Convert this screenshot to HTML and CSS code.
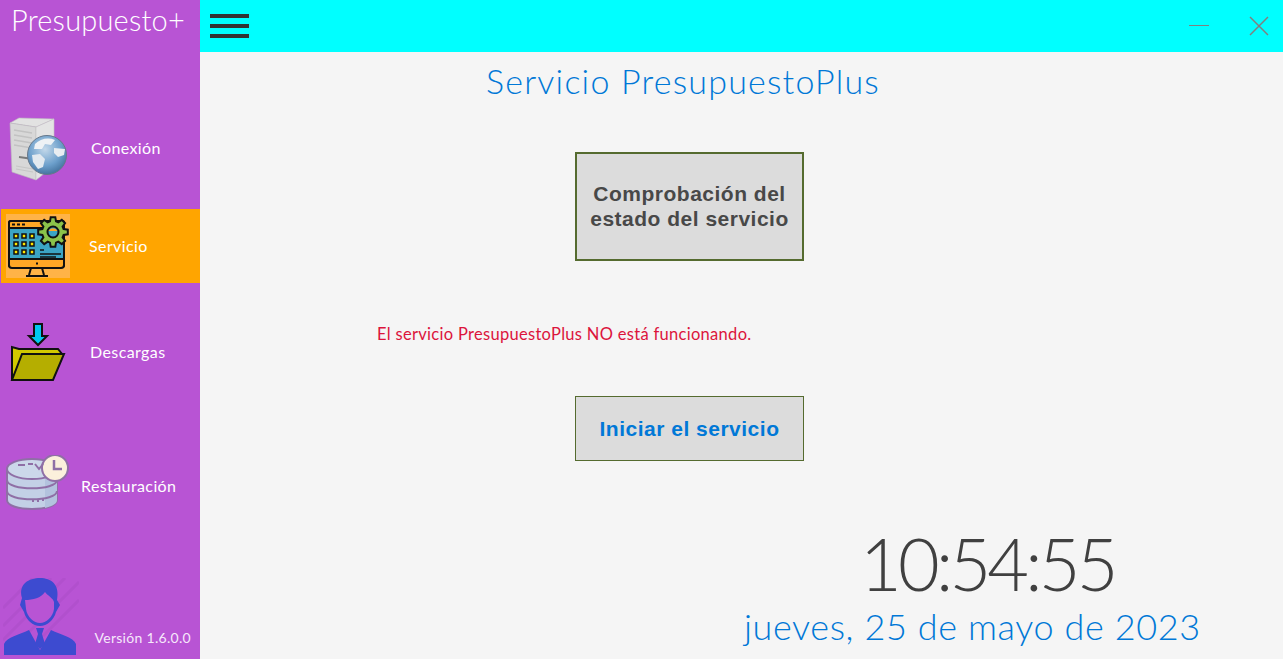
FILE: index.html
```html
<!DOCTYPE html>
<html lang="es">
<head>
    <meta charset="UTF-8">
    <meta name="viewport" content="width=device-width, initial-scale=1.0">
    <title>Presupuesto+</title>
    <link rel="stylesheet" href="styles.css">
</head>
<body>
    <div class="app">
        <aside class="sidebar">
            <div class="brand">Presupuesto+</div>
            <nav class="nav">
                <div class="nav-item item-conexion">
                    <svg class="icon-server" width="62" height="66" viewBox="0 0 62 66">
                        <defs>
                            <radialGradient id="globe" cx="0.45" cy="0.35" r="0.7">
                                <stop offset="0" stop-color="#c4d9ea"/>
                                <stop offset="0.6" stop-color="#6c9fcb"/>
                                <stop offset="1" stop-color="#3e6b96"/>
                            </radialGradient>
                        </defs>
                        <path d="M1 7 L10 2 L45 3 L27 11 Z" fill="#e2e2e2" stroke="#c0c0c0" stroke-width="0.6"/>
                        <path d="M1 7 L27 11 L27 64 L3 56 Z" fill="#d8d8d8" stroke="#bcbcbc" stroke-width="0.6"/>
                        <path d="M27 11 L45 3 L45 50 L27 64 Z" fill="#e4e4e4" stroke="#c4c4c4" stroke-width="0.6"/>
                        <path d="M5 14 L23 17 M5 19 L23 22 M5 24 L23 27 M5 29 L23 32" stroke="#c2c2c2" stroke-width="1.400"/>
                        <path d="M10 41 L24 43" stroke="#7a7a7a" stroke-width="2"/>
                        <path d="M7 50 L24 53 M7 53 L24 56" stroke="#c6c6c6" stroke-width="1"/>
                        <circle cx="38" cy="39" r="19.500" fill="url(#globe)" stroke="#67788a" stroke-width="1"/>
                        <path d="M26 28 C31 23 39 21 46 24 L42 29 L36 28 L33 33 L25 33 Z" fill="#eef2f5"/>
                        <path d="M45 32 L56 33 L55 39 L49 41 L45 37 Z" fill="#e8edf1"/>
                        <path d="M23 39 L31 38 L36 43 L34 51 L29 53 L24 46 Z" fill="#e2e9ef"/>
                    </svg>
                    <span class="nav-label">Conexión</span>
                </div>
                <div class="nav-item active item-servicio">
                    <svg class="icon-service" width="64" height="64" viewBox="0 0 64 64">
                        <rect width="64" height="64" fill="#ffb347"/>
                        <rect x="3" y="7" width="55" height="46" rx="2" fill="#3ba4c4" stroke="#111" stroke-width="2"/>
                        <path d="M3 14 V9 Q3 7 5 7 H56 Q58 7 58 9 V14 Z" fill="#ffa726" stroke="#111" stroke-width="2"/>
                        <path d="M6 10.500 H9 M11 10.500 H14 M16 10.500 H19" stroke="#111" stroke-width="2"/>
                        <path d="M3 45 H58 V51 Q58 54 55 54 H6 Q3 54 3 51 Z" fill="#ffa726" stroke="#111" stroke-width="2"/>
                        <g class="keys">
                            <rect x="8" y="20" width="4" height="4"/><rect x="16" y="20" width="4" height="4"/><rect x="24" y="20" width="4" height="4"/>
                            <rect x="8" y="28" width="4" height="4"/><rect x="16" y="28" width="4" height="4"/><rect x="24" y="28" width="4" height="4"/>
                            <rect x="8" y="36" width="4" height="4"/><rect x="16" y="36" width="4" height="4"/><rect x="24" y="36" width="4" height="4"/>
                        </g>
                        <path d="M34 36 H38 M34 40 H55 M34 43 H50" stroke="#111" stroke-width="1.500"/>
                        <path d="M25 54 L23 61 M36 54 L38 61 M20 62 H42" stroke="#111" stroke-width="2" fill="none"/>
                        <rect x="30" y="48.500" width="2" height="2" fill="#111"/>
                        <polygon transform="translate(47 18)" fill="#8bc34a" stroke="#111" stroke-width="2" points="10.600,-3 14.800,-2.300 14.800,2.300 10.600,3 9.600,5.300 12.100,8.800 8.800,12.100 5.300,9.600 3,10.600 2.300,14.800 -2.300,14.800 -3,10.600 -5.300,9.600 -8.800,12.100 -12.100,8.800 -9.600,5.300 -10.600,3 -14.800,2.300 -14.800,-2.300 -10.600,-3 -9.600,-5.300 -12.100,-8.800 -8.800,-12.100 -5.300,-9.600 -3,-10.600 -2.300,-14.800 2.300,-14.800 3,-10.600 5.300,-9.600 8.800,-12.100 12.100,-8.800 9.600,-5.300"/>
                        <circle cx="47" cy="18" r="5.500" fill="#3ba4c4" stroke="#111" stroke-width="2"/>
                        <path d="M42.500 17 A5 5 0 0 1 51.500 17 Z" fill="#ffa726"/>
                    </svg>
                    <span class="nav-label">Servicio</span>
                </div>
                <div class="nav-item item-descargas">
                    <svg class="icon-folder" width="56" height="60" viewBox="0 0 56 60">
                        <path d="M24 1 H32 V13 H37 L28 22 L19 13 H24 Z" fill="#00c8f0" stroke="#111" stroke-width="2"/>
                        <path d="M2 57 V24 L9 26 H48 L52 31 H14 Z" fill="#d2c800" stroke="#111" stroke-width="2"/>
                        <path d="M2 57 L12 31 H54 L43 57 Z" fill="#b5ae00" stroke="#111" stroke-width="2"/>
                    </svg>
                    <span class="nav-label">Descargas</span>
                </div>
                <div class="nav-item item-restauracion">
                    <svg class="icon-database" width="64" height="64" viewBox="0 0 64 64">
                        <path d="M2 14 V45 C2 57 52 57 52 45 V14 Z" fill="#c3d0e6" stroke="#8f6fa6" stroke-width="2"/>
                        <path d="M40 20 V53 C47 51 52 49 52 45 V14 Z" fill="#b3c2de"/>
                        <ellipse cx="27" cy="14" rx="25" ry="10" fill="#ccd8ea" stroke="#8f6fa6" stroke-width="2"/>
                        <path d="M2 25 C2 36 52 36 52 25 M2 36 C2 47 52 47 52 36" fill="none" stroke="#8f6fa6" stroke-width="2"/>
                        <path d="M13 10 H20 M23 9 H28 M28 44 V47 M33 44 V47 M38 43 V46" stroke="#8f6fa6" stroke-width="2"/>
                        <circle cx="50" cy="13" r="13" fill="#fbf0dc" stroke="#8f6fa6" stroke-width="2"/>
                        <path d="M49 5 V14 H57" fill="none" stroke="#8f6fa6" stroke-width="2.500"/>
                        <path d="M30 9 L34 14 L38 9" fill="none" stroke="#8f6fa6" stroke-width="2"/>
                    </svg>
                    <span class="nav-label">Restauración</span>
                </div>
            </nav>
            <div class="sidebar-footer">
                <svg class="icon-user" width="76" height="77" viewBox="0 0 76 77">
                    <path d="M0 30 L30 0 M0 48 L48 0 M0 62 L62 0 M14 66 L76 4 M40 58 L76 22" stroke="#a94cc6" stroke-width="3" opacity="0.45"/>
                    <path d="M1 77 V66 C4 59 16 57 26 52 L37 72 L48 52 C58 57 70 59 73 66 V77 Z" fill="#3d4bd0"/>
                    <path d="M33 50 L41 50 L39 56 L42 66 L37 71 L32 66 L35 56 Z" fill="#3d4bd0"/>
                    <path d="M19 20 C15 6 26 0 37 0 C48 0 57 6 54 22 L57 27 L53 34 C51 42 44 48 37 48 C30 48 23 42 21 34 L17 27 Z" fill="#3d4bd0"/>
                    <path d="M22 22 C30 22 38 20 42 14 C45 18 50 20 51 24 V31 C50 39 43 45 37 45 C31 45 24 39 23 31 Z" fill="#b854d4"/>
                </svg>
                <span class="version">Versión 1.6.0.0</span>
            </div>
        </aside>
        <div class="content">
            <header class="topbar">
                <div class="menu-btn"><span></span><span></span><span></span></div>
                <div class="window-btns">
                    <span class="min-btn"></span>
                    <svg class="close-btn" width="20" height="20" viewBox="0 0 20 20">
                        <path d="M1 1 L19 19 M19 1 L1 19" stroke="#808080" stroke-width="1.500"/>
                    </svg>
                </div>
            </header>
            <main class="main">
                <h1 class="title">Servicio PresupuestoPlus</h1>
                <button class="btn btn-check" type="button">Comprobación del<br>estado del servicio</button>
                <p class="status">El servicio PresupuestoPlus NO está funcionando.</p>
                <button class="btn btn-start" type="button">Iniciar el servicio</button>
                <div class="clock">10:54:55</div>
                <div class="date">jueves, 25 de mayo de 2023</div>
            </main>
        </div>
    </div>
</body>
</html>
```

FILE: styles.css
```css
* {
    box-sizing: border-box;
}
html, body {
    height: 100%;
}
body {
    margin: 0;
    overflow: hidden;
    font-family: "Lato", "Open Sans", sans-serif;
    font-weight: 300;
    background-color: #f5f5f5;
}
.app {
    display: flex;
    height: 659px;
}
.sidebar {
    width: 200px;
    flex-shrink: 0;
    display: flex;
    flex-direction: column;
    background-color: #b854d4;
    color: #fff;
}
.brand {
    height: 112px;
    padding: 3px 0 0 11px;
    font-size: 29px;
    font-weight: 300;
    line-height: 34px;
    letter-spacing: 0.2px;
    white-space: nowrap;
}
.nav {
    display: flex;
    flex-direction: column;
}
.nav-item {
    display: flex;
    align-items: center;
    height: 74px;
    margin-left: 1px;
}
.nav-item.active {
    background-color: #ffa500;
}
.item-conexion {
    padding-left: 8px;
}
.item-servicio {
    margin-top: 23px;
    padding-left: 5px;
}
.item-descargas {
    margin-top: 33px;
    padding-left: 9px;
}
.item-restauracion {
    margin-top: 60px;
    padding-left: 4px;
}
.nav-label {
    margin-bottom: 4px;
    font-size: 16px;
    font-weight: 400;
    letter-spacing: 0.4px;
    white-space: nowrap;
}
.item-conexion .nav-label {
    margin-left: 20px;
}
.item-servicio .nav-label {
    margin: 0 0 2px 19px;
}
.item-descargas .nav-label {
    margin-left: 24px;
}
.item-restauracion .nav-label {
    margin-left: 12px;
}
.keys rect {
    fill: #ffe600;
    stroke: #111;
    stroke-width: 1.500;
}
.sidebar-footer {
    margin-top: auto;
    display: flex;
    align-items: flex-end;
    padding: 0 9px 4px 3px;
    justify-content: space-between;
}
.version {
    padding-bottom: 9px;
    font-size: 14px;
    font-weight: 400;
    letter-spacing: 0.3px;
    color: #f6e8fb;
    white-space: nowrap;
}
.content {
    flex: 1;
    display: flex;
    flex-direction: column;
    min-width: 0;
}
.topbar {
    height: 52px;
    flex-shrink: 0;
    display: flex;
    justify-content: space-between;
    align-items: center;
    background-color: #00ffff;
}
.menu-btn {
    display: flex;
    flex-direction: column;
    gap: 6px;
    margin: 0 0 0 10px;
}
.menu-btn span {
    display: block;
    width: 39px;
    height: 4px;
    background-color: #333;
}
.window-btns {
    display: flex;
    align-items: center;
    gap: 40px;
    padding-right: 14px;
}
.min-btn {
    display: block;
    width: 20px;
    height: 1px;
    margin-bottom: 2px;
    background-color: #808080;
}
.close-btn {
    display: block;
}
.main {
    flex: 1;
    display: flex;
    flex-direction: column;
    align-items: flex-start;
    min-height: 0;
}
.title {
    margin: 9px 0 0 286px;
    font-size: 34px;
    font-weight: 300;
    line-height: 40px;
    letter-spacing: 1.2px;
    color: #0078d7;
    white-space: nowrap;
}
.btn {
    width: 229px;
    margin-left: 375px;
    padding: 0 0 2px;
    background-color: #dcdcdc;
    font-family: "Liberation Sans", Arial, sans-serif;
    font-size: 21px;
    font-weight: 700;
    line-height: 25px;
    letter-spacing: 0.5px;
    cursor: pointer;
}
.btn-check {
    height: 109px;
    margin-top: 51px;
    border: 2px solid #556b2f;
    color: #484848;
}
.btn-start {
    height: 65px;
    margin-top: 52px;
    padding: 0;
    border: 1px solid #556b2f;
    color: #0078d7;
}
.status {
    margin: 63px 0 0 177px;
    font-size: 16.500px;
    font-weight: 400;
    line-height: 20px;
    letter-spacing: 0.3px;
    color: #dc143c;
    white-space: nowrap;
}
.clock {
    margin: 59px 0 0 660px;
    font-size: 72px;
    font-weight: 300;
    line-height: 86px;
    letter-spacing: -3.800px;
    color: #404040;
    white-space: nowrap;
}
.date {
    margin: -2px 0 0 544px;
    font-size: 36px;
    font-weight: 300;
    line-height: 44px;
    letter-spacing: 0.6px;
    color: #0078d7;
    white-space: nowrap;
}
```
